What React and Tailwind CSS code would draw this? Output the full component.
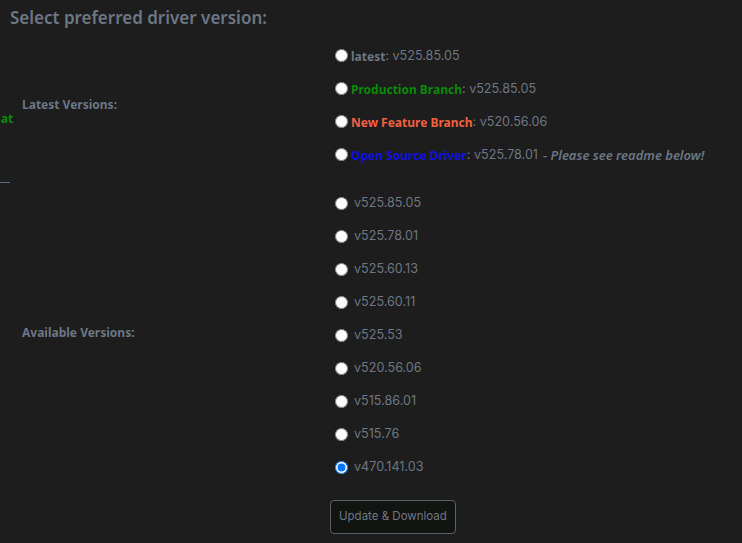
import React, { useState } from "react";

const latest = [
    { label: "latest", color: "text-[#6c7684]", version: "v525.85.05" },
    { label: "Production Branch", color: "text-[#0a8a0a]", version: "v525.85.05" },
    { label: "New Feature Branch", color: "text-[#f2603f]", version: "v520.56.06" },
    {
        label: "Open Source Driver",
        color: "text-[#1010e0]",
        version: "v525.78.01",
        note: "Please see readme below!",
    },
];

const available = [
    "v525.85.05",
    "v525.78.01",
    "v525.60.13",
    "v525.60.11",
    "v525.53",
    "v520.56.06",
    "v515.86.01",
    "v515.76",
    "v470.141.03",
];

export default function App() {
    const [picked, setPicked] = useState("v470.141.03");

    return (
        <div className="relative w-[742px] h-[543px] overflow-hidden bg-[#1c1d1c] font-['Noto_Sans',sans-serif]">
            {/* bits of the sidebar that bleed in from the left */}
            <span className="absolute left-[-9px] top-[110px] text-[12px] font-bold text-[#0a8a0a]">
                Nat
            </span>
            <div className="absolute left-0 top-[182px] w-[10px] h-px bg-[#5d6a7c]" />

            <div className="px-[10px] pt-[5px]">
                <h2 className="text-[17px] font-semibold text-[#6c7684] leading-[26px]">
                    Select preferred driver version:
                </h2>

                <div className="grid grid-cols-[320px_1fr] mt-[9px]">
                    <div className="flex items-center pl-[12px] pb-[2px] text-[12px] font-bold text-[#6c7684]">
                        Latest Versions:
                    </div>
                    <div className="flex flex-col">
                        {latest.map((item) => (
                            <label
                                key={item.label}
                                className="flex items-center h-[33px] text-[12.6px] text-[#6f7782]"
                            >
                                <input
                                    type="radio"
                                    name="driver"
                                    value={item.label}
                                    checked={picked === item.label}
                                    onChange={() => setPicked(item.label)}
                                    className="ml-[5px] mr-[3px] mb-[3px] w-[13px] h-[13px]"
                                />
                                <span className={`text-[12px] font-bold ${item.color}`}>
                                    {item.label}
                                </span>
                                <span className="font-['Inter',sans-serif]">
                                    :&nbsp;{item.version}
                                </span>
                                {item.note && (
                                    <span className="ml-[5px] text-[13px] font-semibold italic text-[#6c7684]">
                                        - {item.note}
                                    </span>
                                )}
                            </label>
                        ))}
                    </div>

                    <div className="flex items-center pl-[12px] pb-[6px] text-[12px] font-bold text-[#6c7684] mt-[15px]">
                        Available Versions:
                    </div>
                    <div className="flex flex-col mt-[15px]">
                        {available.map((v) => (
                            <label
                                key={v}
                                className="flex items-center h-[33px] text-[12.6px] text-[#6f7782] font-['Inter',sans-serif]"
                            >
                                <input
                                    type="radio"
                                    name="driver"
                                    value={v}
                                    checked={picked === v}
                                    onChange={() => setPicked(v)}
                                    className="ml-[5px] mr-[6px] w-[13px] h-[13px]"
                                />
                                {v}
                            </label>
                        ))}
                    </div>

                    <div />
                    <div className="pt-[16px]">
                        <button
                            type="button"
                            className="h-[34px] px-[8px] rounded-[4px] border border-[#596069] bg-[#121412] text-[11.5px] text-[#6f7782] font-['Inter',sans-serif]"
                        >
                            Update &amp; Download
                        </button>
                    </div>
                </div>
            </div>
        </div>
    );
}
